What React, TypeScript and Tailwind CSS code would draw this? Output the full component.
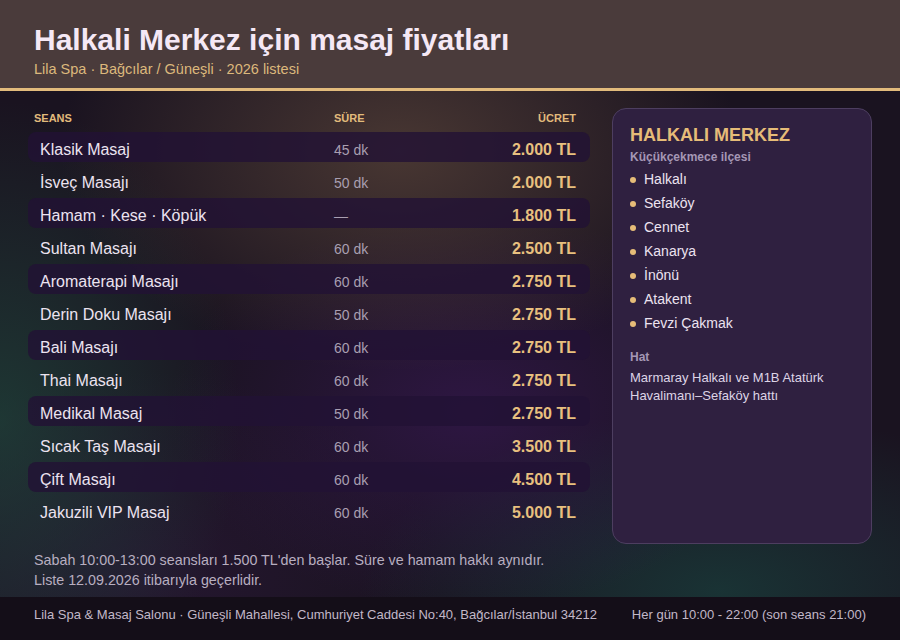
const ROWS = [
  { name: "Klasik Masaj", time: "45 dk", price: "2.000 TL" },
  { name: "İsveç Masajı", time: "50 dk", price: "2.000 TL" },
  { name: "Hamam · Kese · Köpük", time: "—", price: "1.800 TL" },
  { name: "Sultan Masajı", time: "60 dk", price: "2.500 TL" },
  { name: "Aromaterapi Masajı", time: "60 dk", price: "2.750 TL" },
  { name: "Derin Doku Masajı", time: "50 dk", price: "2.750 TL" },
  { name: "Bali Masajı", time: "60 dk", price: "2.750 TL" },
  { name: "Thai Masajı", time: "60 dk", price: "2.750 TL" },
  { name: "Medikal Masaj", time: "50 dk", price: "2.750 TL" },
  { name: "Sıcak Taş Masajı", time: "60 dk", price: "3.500 TL" },
  { name: "Çift Masajı", time: "60 dk", price: "4.500 TL" },
  { name: "Jakuzili VIP Masaj", time: "60 dk", price: "5.000 TL" },
];

const AREAS = ["Halkalı", "Sefaköy", "Cennet", "Kanarya", "İnönü", "Atakent", "Fevzi Çakmak"];

export default function App() {
  return (
    <div className="w-[900px] h-[640px] flex flex-col overflow-hidden bg-[#1a1320] font-['Liberation_Sans',Arial,sans-serif]">
      {/* Header */}
      <header className="bg-[#4a3b3b] border-b-[3px] border-[#e2bb7c] px-[34px] pt-[22px] pb-[10px]">
        <h1 className="text-[30px] leading-[36px] font-bold text-[#f5e8f5]">Halkali Merkez için masaj fiyatları</h1>
        <p className="mt-[2px] text-[14.5px] leading-[18px] text-[#dcb87c]">Lila Spa · Bağcılar / Güneşli · 2026 listesi</p>
      </header>

      {/* Body */}
      <main className="flex-1 flex flex-col px-[28px] pt-[17px] bg-[radial-gradient(ellipse_340px_220px_at_400px_60px,rgba(92,70,58,0.7),transparent),radial-gradient(ellipse_240px_320px_at_0px_330px,rgba(32,74,62,0.65),transparent),radial-gradient(ellipse_300px_200px_at_470px_320px,rgba(62,25,95,0.55),transparent),radial-gradient(ellipse_360px_180px_at_720px_500px,rgba(25,72,66,0.6),transparent),radial-gradient(ellipse_300px_200px_at_140px_480px,rgba(48,26,64,0.5),transparent)]">
        <div className="flex gap-[22px]">
          {/* Price table */}
          <div className="w-[562px] pb-[19px]">
            <div className="grid grid-cols-[300px_1fr_auto] items-center h-[20px] pl-[6px] pr-[14px] text-[11px] font-bold text-[#e2bb7c]">
              <span>SEANS</span>
              <span>SÜRE</span>
              <span className="text-right">ÜCRET</span>
            </div>
            <div className="mt-[4px] flex flex-col gap-[3px]">
              {ROWS.map((r, i) => (
                <div
                  key={r.name}
                  className={`grid grid-cols-[294px_1fr_auto] items-center h-[30px] pt-[6px] pl-[12px] pr-[14px] rounded-[8px] ${i % 2 === 0 ? "bg-[rgba(34,18,52,0.8)]" : ""}`}
                >
                  <span className="text-[16px] leading-[20px] text-[#ece3f0]">{r.name}</span>
                  <span className="text-[14px] leading-[20px] text-[#a99fb1]">{r.time}</span>
                  <span className="text-right text-[16px] leading-[20px] font-bold text-[#e8c07f]">{r.price}</span>
                </div>
              ))}
            </div>
          </div>

          {/* District card */}
          <aside className="w-[260px] rounded-[14px] border border-[#4d3e60] bg-[#2f2040] px-[17px] pt-[16px]">
            <h2 className="text-[18px] leading-[20px] font-bold text-[#e6bc78]">HALKALI MERKEZ</h2>
            <p className="mt-[4px] text-[12px] leading-[16px] font-bold text-[#a597b5]">Küçükçekmece ilçesi</p>
            <ul className="mt-[4px] flex flex-col gap-[4px]">
              {AREAS.map((a) => (
                <li key={a} className="flex items-center gap-[8px] text-[14px] leading-[20px] text-[#ece3f0]">
                  <span className="w-[6px] h-[6px] rounded-full bg-[#e6bc78] mt-[2px]" />
                  {a}
                </li>
              ))}
            </ul>
            <p className="mt-[16px] text-[12px] leading-[16px] font-bold text-[#a597b5]">Hat</p>
            <p className="mt-[4px] text-[13px] leading-[18px] text-[#ddd4e6]">Marmaray Halkalı ve M1B Atatürk Havalimanı–Sefaköy hattı</p>
          </aside>
        </div>

        <div className="mt-[6px] pl-[6px] text-[14.3px] leading-[20px] text-[#b8aec0]">
          <p>Sabah 10:00-13:00 seansları 1.500 TL'den başlar. Süre ve hamam hakkı aynıdır.</p>
          <p>Liste 12.09.2026 itibarıyla geçerlidir.</p>
        </div>
      </main>

      {/* Footer */}
      <footer className="h-[43px] shrink-0 flex items-start justify-between px-[34px] pt-[10px] bg-[#140e18] text-[13px] leading-[16px] text-[#c2b8c8]">
        <span>Lila Spa &amp; Masaj Salonu · Güneşli Mahallesi, Cumhuriyet Caddesi No:40, Bağcılar/İstanbul 34212</span>
        <span>Her gün 10:00 - 22:00 (son seans 21:00)</span>
      </footer>
    </div>
  );
}
